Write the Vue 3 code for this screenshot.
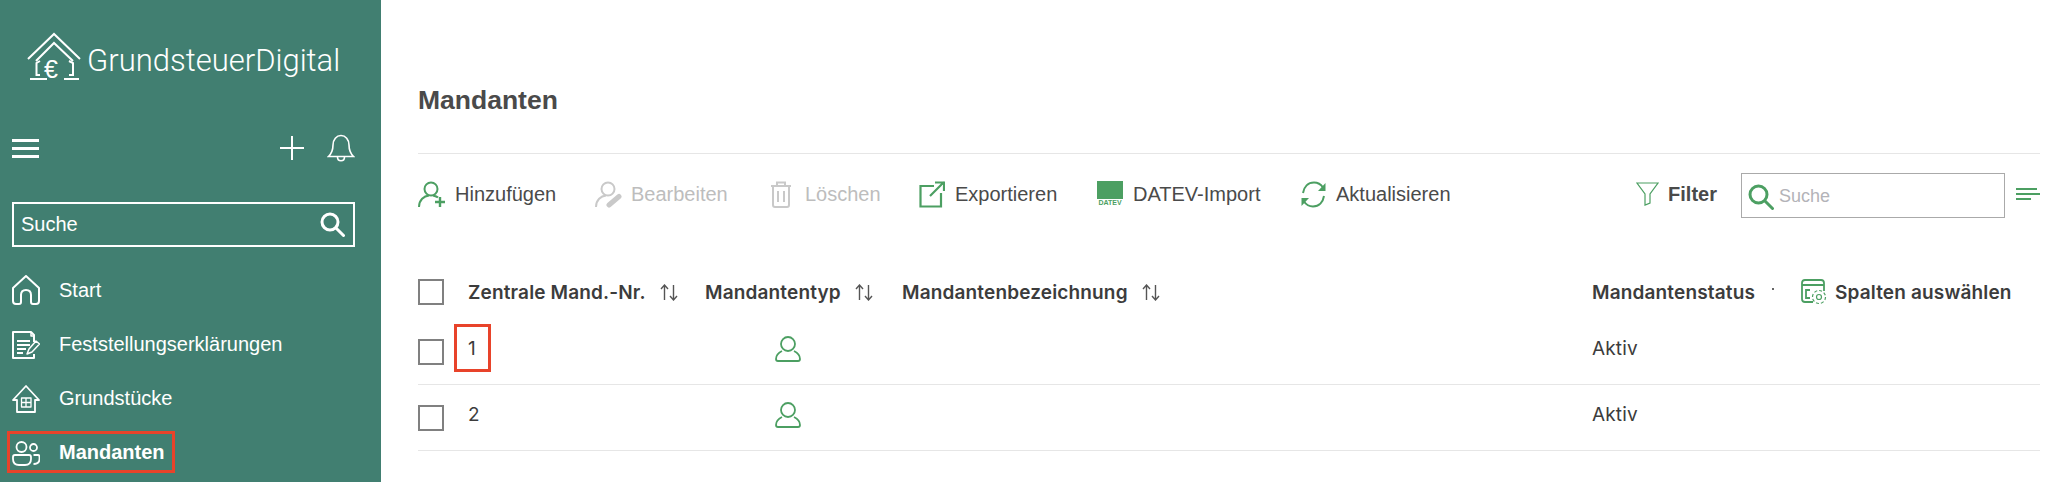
<script setup>
const navItems = [
  { label: "Start", icon: "home" },
  { label: "Feststellungserklärungen", icon: "doc" },
  { label: "Grundstücke", icon: "plot" },
  { label: "Mandanten", icon: "people", active: true },
];

const clients = [
  { nr: "1", status: "Aktiv", marked: true },
  { nr: "2", status: "Aktiv", marked: false },
];
</script>

<template>
  <div class="page">
    <aside class="sidebar">
      <div class="logo">
        <svg class="logo-icon" width="58" height="54" viewBox="0 0 58 54" fill="none" stroke="#fff" stroke-width="2">
          <path d="M2 29 28 4 54 29" />
          <path d="M10 31 28 13 47 31" />
          <path d="M14 31 10.500 33V45H14M43 31 47 33V45H43" />
          <path d="M4 49H21M38 49H53" />
          <text x="18" y="48" font-size="25" font-family="Liberation Sans" fill="#fff" stroke="none">€</text>
        </svg>
        <span class="logo-text">GrundsteuerDigital</span>
      </div>

      <div class="quick">
        <button class="burger" aria-label="Menü"><i></i><i></i><i></i></button>
        <div class="quick-right">
          <svg width="26" height="26" viewBox="0 0 26 26" stroke="#fff" stroke-width="2" fill="none">
            <path d="M13 1V25M1 13H25" />
          </svg>
          <svg width="28" height="28" viewBox="0 0 28 28" stroke="#fff" stroke-width="1.600" fill="none">
            <path d="M1.500 22.500C5 19 6 16 6 11 6 5.500 9.500 1.500 14 1.500S22 5.500 22 11C22 16 23 19 26.500 22.500Z" />
            <path d="M10.500 23C10.500 28 17.500 28 17.500 23" />
          </svg>
        </div>
      </div>

      <div class="side-search">
        <span>Suche</span>
        <svg width="25" height="25" viewBox="0 0 25 25" stroke="#fff" fill="none">
          <circle cx="10" cy="10" r="8" stroke-width="3" />
          <path d="M16 16 23.500 23.500" stroke-width="3" stroke-linecap="round" />
        </svg>
      </div>

      <nav class="nav">
        <div v-for="item in navItems" :key="item.label" class="nav-item" :class="{ active: item.active }">
          <svg class="nav-icon" width="28" height="30" viewBox="0 0 28 30" stroke="#fff" stroke-width="2" fill="none" stroke-linejoin="round">
            <template v-if="item.icon === 'home'">
              <path d="M1 13 14 1 27 13V26Q27 29 24 29H21Q19 29 19 27V20Q19 15 14 15T9 20V27Q9 29 7 29H4Q1 29 1 26Z" />
            </template>
            <template v-else-if="item.icon === 'doc'">
              <path d="M22 13V6L19 3H1V29H22V25" />
              <path d="M19 3V7H22" stroke-width="1.500" />
              <path d="M5 12H18M5 16H18M5 20H14M5 24H11" stroke-width="2" />
              <path d="M15 25 17 20 24 12 27.500 15 20 23Z" stroke-width="1.500" />
            </template>
            <template v-else-if="item.icon === 'plot'">
              <path d="M1 17 14 3 27 17H23V29H5V17Z" stroke-width="1.800" />
              <path d="M9.500 15H19V24H9.500ZM14 15V24M9.500 19.500H19" stroke-width="1.300" />
            </template>
            <template v-else>
              <circle cx="9.500" cy="10" r="5" stroke-width="1.800" />
              <circle cx="21.500" cy="10.500" r="3.500" stroke-width="1.800" />
              <path d="M3 18H17Q19 18 19 20V22Q19 28 13 28H7Q1 28 1 22V20Q1 18 3 18Z" stroke-width="1.800" />
              <path d="M21.500 18H26Q27.500 18 27.500 20V22Q27.500 27 21.500 27" stroke-width="1.800" />
            </template>
          </svg>
          <span>{{ item.label }}</span>
          <div v-if="item.active" class="mark mark-nav"></div>
        </div>
      </nav>
    </aside>

    <main class="content">
      <h1>Mandanten</h1>

      <div class="toolbar">
        <div class="tool" style="width: 177px">
          <svg width="28" height="27" viewBox="0 0 28 27" fill="none" stroke="#4c9f62" stroke-width="2">
            <circle cx="13" cy="8" r="6.500" />
            <path d="M1 26C1 19 6 15 11 14.500M15 14.500C17 15 19 15.500 20 16.500" />
            <path d="M22 16V26M17 21H27" stroke-width="2.400" />
          </svg>
          <span>Hinzufügen</span>
        </div>
        <div class="tool off" style="width: 175px">
          <svg width="27" height="27" viewBox="0 0 27 27" fill="none" stroke="#c9c9c9" stroke-width="2">
            <circle cx="13" cy="8" r="6.500" />
            <path d="M1 26C1 19 6 15 11 14.500" />
            <path d="M14 24 24 15.500" stroke-width="5" stroke-linecap="round" />
          </svg>
          <span>Bearbeiten</span>
        </div>
        <div class="tool off lo" style="width: 149px">
          <svg width="22" height="27" viewBox="0 0 22 27" fill="none" stroke="#c9c9c9" stroke-width="2">
            <path d="M1 5H21M7 5V1.500H15V5M3 5V24Q3 26 5 26H17Q19 26 19 24V5M8 10V21M14 10V21" />
          </svg>
          <span>Löschen</span>
        </div>
        <div class="tool wide" style="width: 178px">
          <svg width="26" height="27" viewBox="0 0 26 27" fill="none" stroke="#4c9f62" stroke-width="2.200">
            <path d="M15 5H1.500V25.500H22V12M25 1 11 15M16 1.500H25V10" />
          </svg>
          <span>Exportieren</span>
        </div>
        <div class="tool wide" style="width: 203px">
          <div class="datev"><i></i><b>DATEV</b></div>
          <span>DATEV-Import</span>
        </div>
        <div class="tool">
          <svg width="27" height="27" viewBox="0 0 27 27" fill="none" stroke="#4c9f62" stroke-width="2">
            <path d="M3 12C4 6 8 1.500 14 1.500 18 1.500 21 3.500 23 6.500" />
            <path d="M24 15C23 21 19 25.500 13 25.500 9 25.500 6 23.500 4 20.500" />
            <path d="M25.500 2V10H18Z M1.500 25V17H9Z" fill="#4c9f62" stroke="none" />
          </svg>
          <span>Aktualisieren</span>
        </div>

        <div class="tool-right">
          <div class="filter">
            <svg width="23" height="24" viewBox="0 0 23 24" fill="none" stroke="#4c9f62" stroke-width="1.200">
              <path d="M1 1H22L14 12V21L9 23V12Z" />
            </svg>
            <b>Filter</b>
          </div>
          <div class="search">
            <svg width="26" height="26" viewBox="0 0 26 26" fill="none" stroke="#4c9f62">
              <circle cx="10.500" cy="10.500" r="8.500" stroke-width="3" />
              <path d="M17 17 24.500 24.500" stroke-width="3" stroke-linecap="round" />
            </svg>
            <span>Suche</span>
          </div>
          <div class="lines"><i style="width: 21px"></i><i style="width: 24px"></i><i style="width: 15px"></i></div>
        </div>
      </div>

      <div class="table">
        <div class="row head">
          <div class="cell-check"><span class="check"></span></div>
          <div class="cell">
            Zentrale Mand.-Nr.
            <svg class="sort" width="18" height="17" viewBox="0 0 18 17" fill="none" stroke="#555" stroke-width="1.400">
              <path d="M4.500 16V1M1 5 4.500 1 8 5M13.500 1V16M10 12 13.500 16 17 12" />
            </svg>
          </div>
          <div class="cell">
            Mandantentyp
            <svg class="sort" width="18" height="17" viewBox="0 0 18 17" fill="none" stroke="#555" stroke-width="1.400">
              <path d="M4.500 16V1M1 5 4.500 1 8 5M13.500 1V16M10 12 13.500 16 17 12" />
            </svg>
          </div>
          <div class="cell">
            Mandantenbezeichnung
            <svg class="sort" width="18" height="17" viewBox="0 0 18 17" fill="none" stroke="#555" stroke-width="1.400">
              <path d="M4.500 16V1M1 5 4.500 1 8 5M13.500 1V16M10 12 13.500 16 17 12" />
            </svg>
          </div>
          <div class="cell status-head">
            Mandantenstatus
            <span class="tick"></span>
            <div class="columns">
              <svg width="27" height="26" viewBox="0 0 27 26" fill="none" stroke="#4c9f62" stroke-width="1.800">
                <path d="M12 23H4Q1 23 1 20V4Q1 1 4 1H20Q23 1 23 4V12" />
                <path d="M1 6H23" stroke-width="2" />
                <path d="M9 11H5V19H9" />
                <circle cx="18" cy="18" r="2.500" stroke-width="1.200" />
                <circle cx="18" cy="18" r="6.500" stroke-width="1.200" stroke-dasharray="3 2" />
              </svg>
              Spalten auswählen
            </div>
          </div>
        </div>

        <div v-for="c in clients" :key="c.nr" class="row body" :class="{ first: c.marked }">
          <div class="cell-check"><span class="check"></span></div>
          <div class="cell nr">
            {{ c.nr }}
            <div v-if="c.marked" class="mark mark-nr"></div>
          </div>
          <div class="cell type">
            <svg width="26" height="26" viewBox="0 0 26 26" fill="none" stroke="#4c9f62" stroke-width="1.800">
              <circle cx="13" cy="8" r="7" />
              <path d="M7 15C3 17 1 20 1 23 1 25 2 25 3 25H23C24 25 25 25 25 23 25 20 23 17 19 15" />
            </svg>
          </div>
          <div class="cell"></div>
          <div class="cell val">{{ c.status }}</div>
        </div>
      </div>
    </main>
  </div>
</template>

<style>
html,
body {
  margin: 0;
  background: #fff;
}
</style>

<style scoped>
.page {
  display: flex;
  width: 2048px;
  height: 482px;
  overflow: hidden;
  font-family: "Liberation Sans", Arial, sans-serif;
  background: #fff;
}

.sidebar {
  width: 381px;
  flex-shrink: 0;
  box-sizing: border-box;
  padding: 30px 26px 0 12px;
  background: #417f71;
  color: #fff;
}
.logo {
  display: flex;
  align-items: center;
  gap: 3px;
  height: 54px;
  margin-left: 14px;
}
.logo-text {
  font-family: "Roboto", sans-serif;
  font-weight: 300;
  font-size: 31px;
  letter-spacing: 0;
  margin-top: 6px;
}
.quick {
  display: flex;
  justify-content: space-between;
  align-items: center;
  height: 28px;
  margin-top: 50px;
}
.burger {
  display: flex;
  flex-direction: column;
  gap: 5px;
  padding: 0;
  width: 27px;
  background: none;
  border: none;
}
.burger i {
  display: block;
  height: 3px;
  background: #fff;
}
.quick-right {
  display: flex;
  align-items: center;
  gap: 22px;
}
.side-search {
  display: flex;
  justify-content: space-between;
  align-items: center;
  box-sizing: border-box;
  height: 45px;
  margin-top: 40px;
  padding: 0 8px 0 7px;
  border: 2px solid #fff;
  font-size: 20px;
}
.nav {
  margin-top: 16px;
}
.nav-item {
  position: relative;
  display: flex;
  align-items: center;
  gap: 19px;
  height: 54px;
  font-size: 20px;
}
.nav-item.active {
  font-weight: 700;
}
.nav-icon {
  flex-shrink: 0;
}
.mark {
  position: absolute;
  box-sizing: border-box;
  border: 3px solid #e8432a;
}
.mark-nav {
  left: -5px;
  top: 6px;
  width: 168px;
  height: 42px;
}

.content {
  flex: 1;
  padding: 0 8px 0 37px;
  color: #4a4a4a;
}
h1 {
  margin: 0;
  padding: 86px 0 39px;
  border-bottom: 1px solid #e6e6e6;
  font-size: 26.500px;
  line-height: 28px;
  font-weight: 700;
}
.toolbar {
  display: flex;
  align-items: center;
  height: 80px;
}
.tool {
  display: flex;
  align-items: center;
  gap: 9px;
  font-size: 20px;
}
.tool.wide {
  gap: 10px;
}
.tool.lo {
  gap: 13px;
}
.tool.off {
  color: #bdbdbd;
}
.datev {
  display: flex;
  flex-direction: column;
  align-items: center;
  width: 26px;
  color: #4c9f62;
}
.datev i {
  display: block;
  width: 26px;
  height: 18px;
  background: #4c9f62;
}
.datev b {
  font-size: 7px;
  line-height: 8px;
}
.tool-right {
  display: flex;
  align-items: center;
  margin-left: auto;
}
.filter {
  display: flex;
  align-items: center;
  gap: 9px;
  font-size: 20px;
  margin-right: 24px;
}
.search {
  display: flex;
  align-items: center;
  gap: 5px;
  box-sizing: border-box;
  width: 264px;
  height: 45px;
  margin-top: 2px;
  padding: 3px 0 0 6px;
  border: 1px solid #aaa;
  color: #b3b3b8;
  font-size: 18px;
}
.lines {
  display: flex;
  flex-direction: column;
  gap: 3px;
  width: 24px;
  margin-left: 11px;
}
.lines i {
  display: block;
  height: 2px;
  background: #4c9f62;
}

.table {
  margin-top: 31px;
  font-family: "Inter", sans-serif;
  font-size: 19px;
  letter-spacing: 0.15px;
  color: #3c3c3c;
}
.row {
  display: grid;
  grid-template-columns: 50px 237px 197px 690px 1fr;
  align-items: center;
}
.head {
  height: 54px;
  font-weight: 600;
  white-space: nowrap;
}
.body {
  height: 65px;
  border-bottom: 1px solid #e6e6e6;
}
.check {
  display: block;
  box-sizing: border-box;
  width: 26px;
  height: 26px;
  border: 2px solid #808080;
}
.cell {
  position: relative;
  display: flex;
  align-items: center;
}
.sort {
  margin-left: 14px;
}
.tick {
  width: 2px;
  height: 2px;
  margin-left: 17px;
  margin-bottom: 6px;
  background: #666;
}
.columns {
  display: flex;
  align-items: center;
  gap: 7px;
  margin-left: 27px;
}
.nr,
.val,
.type {
  padding-bottom: 6px;
}
.type {
  padding-left: 70px;
}
.mark-nr {
  left: -14px;
  top: -13px;
  width: 37px;
  height: 48px;
}
</style>
